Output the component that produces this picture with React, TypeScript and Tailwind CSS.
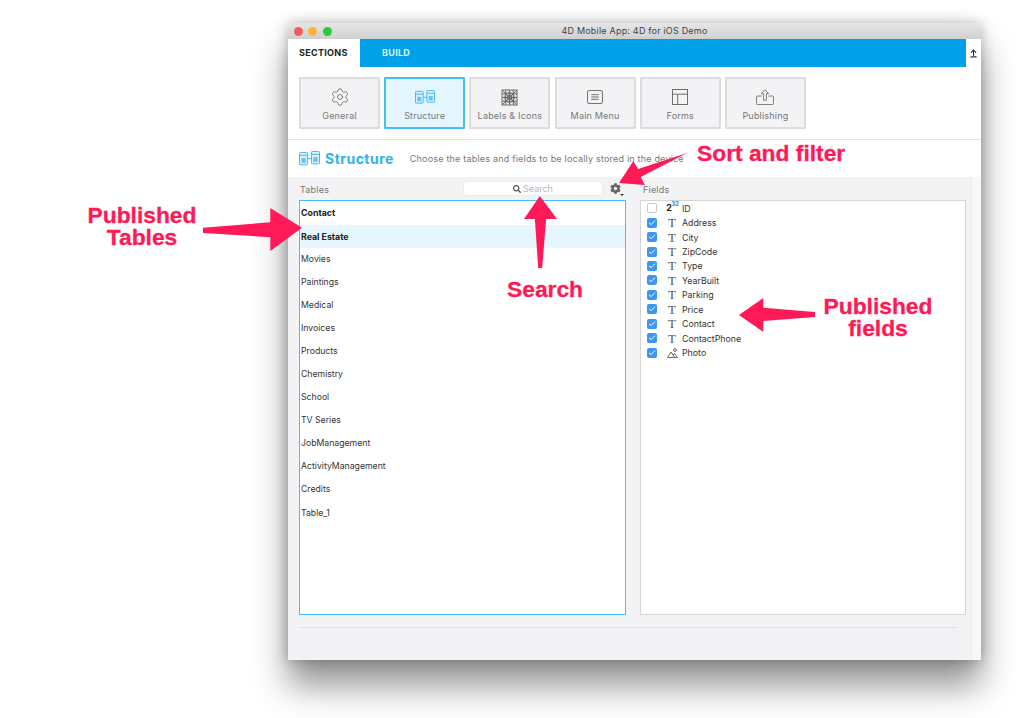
import React from "react";
import { Settings, ArrowUpFromLine, Check } from "lucide-react";
import { FaCog, FaSearch } from "react-icons/fa";

const TABLES = ["Contact","Real Estate","Movies","Paintings","Medical","Invoices","Products","Chemistry","School","TV Series","JobManagement","ActivityManagement","Credits","Table_1"];
const FIELDS = ["ID","Address","City","ZipCode","Type","YearBuilt","Parking","Price","Contact","ContactPhone","Photo"];

function StructureIcon({ width = 20, color = "#3fb4ee" }: { width?: number; color?: string }) {
  return (
    <svg width={width} height={width * 0.68} viewBox="0 0 22 15" fill="none" stroke={color} strokeWidth="1">
      <rect x="0.5" y="1.5" width="8.5" height="13" rx="1" fill="#d9f1fd" />
      <rect x="13" y="0.5" width="8.5" height="13" rx="1" fill="#d9f1fd" />
      <path d="M0.5 4.5h8.5M13 3.5h8.5M9 8h4" />
      <rect x="2.5" y="7.5" width="4.5" height="5" fill={color} stroke="none" opacity="0.75" />
      <rect x="15" y="6.5" width="4.5" height="5" fill={color} stroke="none" opacity="0.75" />
    </svg>
  );
}

function LabelsIcon() {
  return (
    <svg width="17" height="17" viewBox="0 0 18 18" fill="#ddd" stroke="#555" strokeWidth="0.8">
      <rect x="1" y="1" width="16" height="16" />
      <path d="M1 1l16 16M17 1L1 17M9 1v16M1 9h16M1 5h16M1 13h16M5 1v16M13 1v16" />
      <circle cx="9" cy="9" r="5" fill="none" />
      <circle cx="9" cy="9" r="2.5" fill="none" />
    </svg>
  );
}

function MenuIcon() {
  return (
    <svg width="16" height="14" viewBox="0 0 17 15" fill="none" stroke="#666" strokeWidth="1">
      <rect x="0.5" y="0.5" width="16" height="14" rx="1.5" />
      <path d="M4.5 5h8M4.5 7.5h8M4.5 10h8" />
    </svg>
  );
}

function FormsIcon() {
  return (
    <svg width="16" height="16" viewBox="0 0 17 17" fill="none" stroke="#666" strokeWidth="1">
      <rect x="0.5" y="0.5" width="16" height="16" />
      <path d="M0.5 5.5h16M6 5.5v11" />
    </svg>
  );
}

function PublishIcon() {
  return (
    <svg width="18" height="16" viewBox="0 0 19 17" fill="none" stroke="#777" strokeWidth="1">
      <path d="M6 7.5H1.5a1 1 0 0 0-1 1v7a1 1 0 0 0 1 1h16a1 1 0 0 0 1-1v-7a1 1 0 0 0-1-1H13" />
      <path d="M9.5 0.8L13.5 5H11v7H8V5H5.5z" />
    </svg>
  );
}

function PhotoIcon() {
  return (
    <svg width="11" height="10" viewBox="0 0 11 10" fill="none" stroke="#444" strokeWidth="0.8">
      <circle cx="8" cy="2" r="1.4" />
      <path d="M0.5 9.5L4 4l3.5 5.5M6 7l1.5-1.5 3 4M0.5 9.5h10" />
    </svg>
  );
}

function Tool({ label, icon, active }: { label: string; icon: React.ReactNode; active?: boolean }) {
  return (
    <div className={active
      ? "flex h-[52px] w-[81px] flex-col items-center rounded-[1px] border-2 border-[#45bdf5] bg-[#e5f6fe] pt-[8px]"
      : "flex h-[52px] w-[81px] flex-col items-center rounded-[1px] border-2 border-[#dcdcde] bg-[#f3f3f5] pt-[8px]"}>
      <div className="flex h-[20px] items-center justify-center">{icon}</div>
      <div className="mt-[3px] text-[9px] leading-[12px] tracking-[0.2px] text-[#777]">{label}</div>
    </div>
  );
}

function Arrow({ className, points }: { className: string; points: string }) {
  return (
    <svg className={className} viewBox="0 0 100 100" preserveAspectRatio="none">
      <polygon points={points} fill="#ff1a57" />
    </svg>
  );
}

const noteClass = "absolute text-center font-bold leading-[22px] text-[22.8px] text-[#ff1a57] font-['Liberation_Sans',sans-serif] [-webkit-text-stroke:0.3px_#ff1a57]";

export default function App() {
  return (
    <div className="relative h-[718px] w-[1024px] overflow-hidden bg-white pl-[288px] pt-[23px] font-['Inter','Liberation_Sans',sans-serif]">
      <div className="flex h-[637px] w-[693px] flex-col rounded-t-[5px] bg-white shadow-[0_26px_34px_rgba(0,0,0,0.42),0_0_14px_rgba(0,0,0,0.28)]">
        {/* title bar */}
        <div className="relative flex h-[16px] items-center justify-center rounded-t-[5px] bg-gradient-to-b from-[#e6e6e6] to-[#d0d0d0] text-[9px] tracking-[0.2px] text-[#444]">
          <div className="absolute left-[5.5px] top-[3.5px] flex gap-[5.5px]">
            <div className="h-[9px] w-[9px] rounded-full bg-[#f8595a]" />
            <div className="h-[9px] w-[9px] rounded-full bg-[#fbb53a]" />
            <div className="h-[9px] w-[9px] rounded-full bg-[#2ec840]" />
          </div>
          4D Mobile App: 4D for iOS Demo
        </div>
        {/* tabs */}
        <div className="flex h-[28px] items-stretch">
          <div className="flex w-[72px] items-center pl-[11px] text-[9px] font-bold tracking-[0.3px] text-[#222]">SECTIONS</div>
          <div className="flex w-[606px] items-center bg-[#00a0e9] pl-[22px] text-[9px] font-bold tracking-[0.3px] text-[#dff3fd]">BUILD</div>
          <div className="flex flex-1 items-center justify-center">
            <ArrowUpFromLine size={9} strokeWidth={3} className="text-[#333]" />
          </div>
        </div>
        {/* toolbar */}
        <div className="flex h-[73px] gap-[4.2px] border-b border-[#e6e6e6] pl-[11px] pt-[10px]">
          <Tool label="General" icon={<Settings size={20} strokeWidth={1} className="text-[#666]" />} />
          <Tool label="Structure" active icon={<StructureIcon />} />
          <Tool label="Labels & Icons" icon={<LabelsIcon />} />
          <Tool label="Main Menu" icon={<MenuIcon />} />
          <Tool label="Forms" icon={<FormsIcon />} />
          <Tool label="Publishing" icon={<PublishIcon />} />
        </div>
        {/* header */}
        <div className="flex h-[37px] items-center pl-[11px]">
          <StructureIcon width={21} />
          <span className="ml-[5px] text-[14px] font-bold tracking-[0.48px] text-[#2fb0f0]">Structure</span>
          <span className="ml-[16px] text-[9px] tracking-[0.2px] text-[#777]">Choose the tables and fields to be locally stored in the device</span>
        </div>
        {/* body */}
        <div className="flex flex-1 bg-[#f3f3f5]">
          <div className="flex-1 pl-[11px] pr-[1px]">
            <div className="flex h-[23px] items-center">
              <div className="w-[164px] pl-[1px] pt-[2px] text-[9px] tracking-[0.2px] text-[#777]">Tables</div>
              <div className="flex h-[15px] w-[140px] items-center justify-center gap-[2px] rounded-[4px] border border-[#ececee] bg-white text-[9px] text-[#b6b6c6]">
                <FaSearch size={8} className="text-[#555]" />
                Search
              </div>
              <div className="relative ml-[7px]">
                <FaCog size={11} className="text-[#666]" />
                <div className="absolute -bottom-[2px] -right-[3px] h-0 w-0 border-x-[2px] border-t-[2px] border-x-transparent border-t-[#333]" />
              </div>
              <div className="ml-[22px] pt-[2px] text-[9px] tracking-[0.2px] text-[#777]">Fields</div>
            </div>
            <div className="flex gap-[14px]">
              <div className="h-[415px] w-[327px] border border-[#45bdf5] bg-white pt-[0.5px]">
                {TABLES.map((t, i) => (
                  <div key={t} className={
                    i === 1 ? "flex h-[23.08px] items-center bg-[#e6f6fe] pl-[1px] text-[8.8px] font-bold text-[#222]"
                    : i === 0 ? "flex h-[23.08px] items-center pl-[1px] text-[8.8px] font-bold text-[#222]"
                    : "flex h-[23.08px] items-center pl-[1px] text-[8.7px] text-[#333]"
                  }>{t}</div>
                ))}
              </div>
              <div className="h-[415px] w-[326px] border border-[#d5d5d5] bg-white">
                {FIELDS.map((f, i) => (
                  <div key={f} className="flex h-[14.45px] items-center pl-[6px] text-[8.8px] text-[#333]">
                    {i === 0 ? (
                      <div className="h-[10px] w-[10px] rounded-[2px] border border-[#c9c9c9] bg-white" />
                    ) : (
                      <div className="flex h-[10px] w-[10px] items-center justify-center rounded-[2px] bg-[#3d96f5]">
                        <Check size={8} strokeWidth={3} className="text-white" />
                      </div>
                    )}
                    <div className="flex w-[25px] justify-center pl-[5px]">
                      {i === 0 ? (
                        <span className="relative right-[3px] font-bold leading-none text-[#222]">2<span className="absolute -top-[3px] left-[5px] text-[6px] text-[#2a8fc0]">32</span></span>
                      ) : i === 10 ? <PhotoIcon /> : (
                        <span className="font-['Liberation_Serif',serif] text-[13px] leading-none text-[#555]">T</span>
                      )}
                    </div>
                    {f}
                  </div>
                ))}
              </div>
            </div>
            <div className="mt-[12px] h-px w-[659px] bg-[#e2e2e4]" />
          </div>
          <div className="w-[10px] border-l border-[#ececee] bg-[#f8f8f9]" />
        </div>
      </div>

      {/* annotations */}
      <Arrow className="absolute left-[203px] top-[208px] h-[43px] w-[99px]" points="0,46 68,33 68,0 100,46 68,100 68,68 0,58" />
      <Arrow className="absolute left-[524px] top-[196px] h-[72px] w-[33px]" points="48,0 100,32 67,32 55,100 43,100 33,32 0,32" />
      <Arrow className="absolute left-[619px] top-[153px] h-[32px] w-[68px]" points="0,94 21,25 28,50 100,0 32,75 38,100" />
      <Arrow className="absolute left-[739px] top-[298px] h-[34px] w-[76px]" points="0,50 32,0 32,29 100,41 100,56 32,68 32,100" />
      <div className={`${noteClass} left-[76px] top-[204px] w-[132px]`}>Published<br />Tables</div>
      <div className={`${noteClass} left-[697px] top-[142px] whitespace-nowrap`}>Sort and filter</div>
      <div className={`${noteClass} left-[507px] top-[278px] whitespace-nowrap`}>Search</div>
      <div className={`${noteClass} left-[812px] top-[295px] w-[132px]`}>Published<br />fields</div>
    </div>
  );
}
